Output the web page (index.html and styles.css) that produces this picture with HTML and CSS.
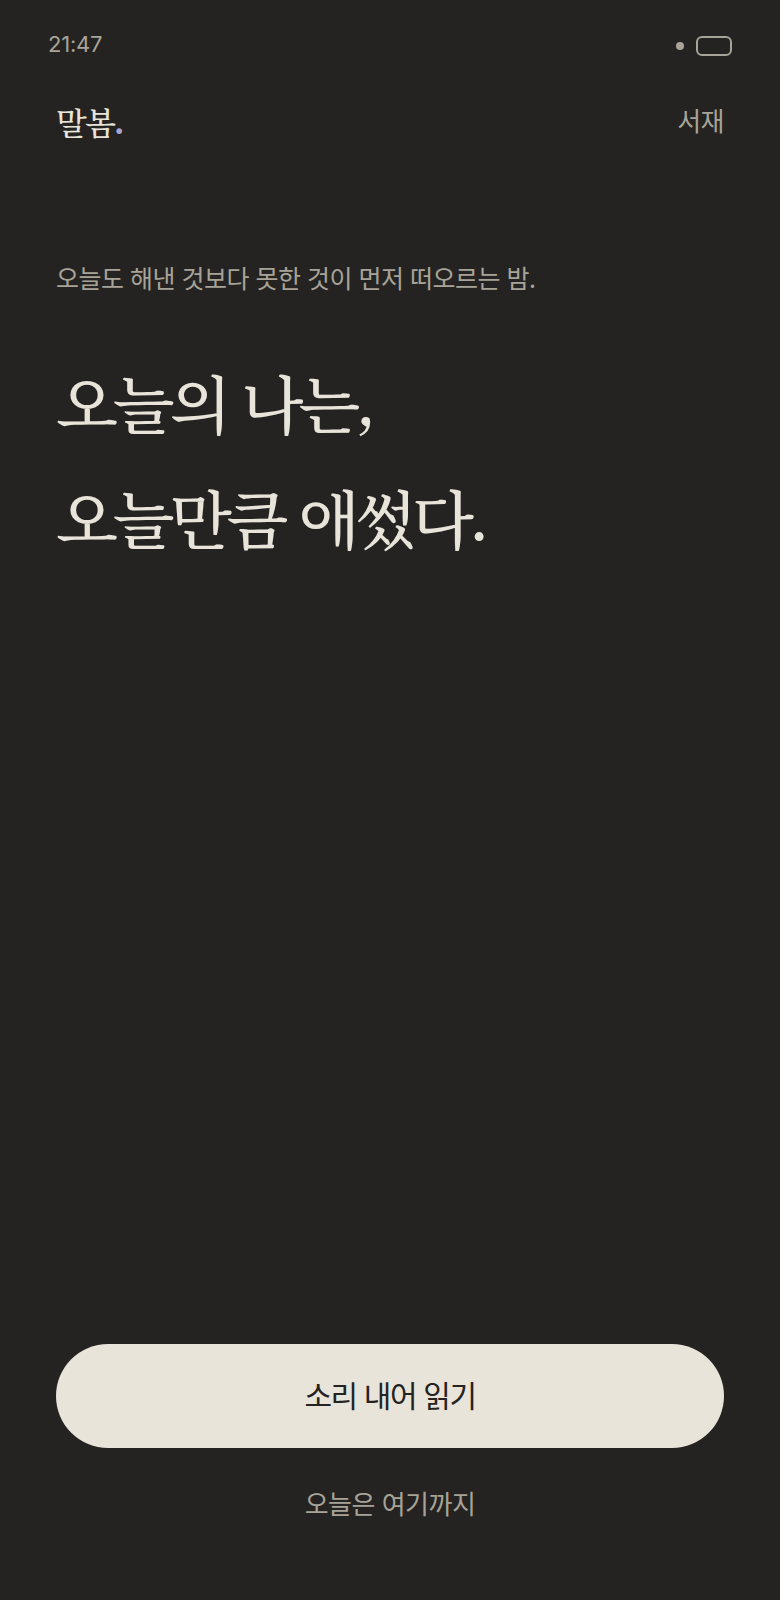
FILE: index.html
```html
<!DOCTYPE html>
<html lang="ko">
	<head>
		<meta charset="UTF-8" />
		<meta name="viewport" content="width=device-width, initial-scale=1.0" />
		<title>말봄</title>
		<link rel="stylesheet" href="styles.css">
	</head>
	<body>
		<div class="screen">
			<div class="status-bar">
				<span class="time">21:47</span>
				<div class="status-icons">
					<span class="status-dot"></span>
					<span class="battery"></span>
				</div>
			</div>

			<header class="top-nav">
				<div class="logo">말봄<span class="logo-dot">.</span></div>
				<a href="#" class="nav-link">서재</a>
			</header>

			<main class="content">
				<p class="lead">오늘도 해낸 것보다 못한 것이 먼저 떠오르는 밤.</p>
				<h1 class="headline">오늘의 나는,<br />오늘만큼 애썼다.</h1>
			</main>

			<footer class="actions">
				<button class="primary-btn">소리 내어 읽기</button>
				<a href="#" class="quiet-link">오늘은 여기까지</a>
			</footer>
		</div>
	</body>
</html>
```

FILE: styles.css
```css
* {
	box-sizing: border-box;
}
body {
	margin: 0;
	background-color: #242321;
	color: #e8e4da;
	font-family: "Noto Sans CJK KR", "Noto Sans", sans-serif;
}
.screen {
	display: flex;
	flex-direction: column;
	height: 1600px;
}
.status-bar {
	display: flex;
	align-items: center;
	justify-content: space-between;
	height: 92px;
	padding: 0 48px;
}
.time {
	padding-bottom: 4px;
	font-family: Inter, sans-serif;
	font-size: 22px;
	letter-spacing: -0.2px;
	color: #a8a398;
}
.status-icons {
	display: flex;
	align-items: center;
	gap: 12px;
}
.status-dot {
	width: 8px;
	height: 8px;
	border-radius: 50%;
	background-color: #a8a398;
}
.battery {
	width: 36px;
	height: 20px;
	border: 2px solid #a8a398;
	border-radius: 6px;
}
.top-nav {
	display: flex;
	align-items: center;
	justify-content: space-between;
	height: 64px;
	padding: 0 56px 6px;
}
.logo {
	font-family: "Noto Serif KR", "Noto Serif CJK KR", serif;
	font-size: 32px;
	font-weight: 500;
	letter-spacing: -2px;
}
.logo-dot {
	color: #a9a6d0;
	font-weight: 700;
}
.nav-link {
	padding-bottom: 4px;
	font-size: 26px;
	letter-spacing: -0.5px;
	color: #a8a398;
	text-decoration: none;
}
.content {
	flex: 1;
	padding: 103px 56px 0;
}
.lead {
	margin: 0;
	font-size: 25px;
	letter-spacing: -0.5px;
	color: #a8a398;
}
.headline {
	margin: 49px 0 0;
	font-family: "Noto Serif KR", "Noto Serif CJK KR", serif;
	font-size: 64px;
	font-weight: 500;
	line-height: 115px;
	letter-spacing: -5px;
}
.actions {
	display: flex;
	flex-direction: column;
	align-items: center;
	gap: 36px;
	padding: 0 56px 79px;
}
.primary-btn {
	width: 100%;
	height: 104px;
	padding: 0 0 4px;
	border: none;
	border-radius: 52px;
	background-color: #e8e4da;
	color: #242321;
	font-family: inherit;
	font-size: 30px;
	letter-spacing: -1.4px;
}
.quiet-link {
	font-size: 26px;
	letter-spacing: -0.5px;
	color: #a8a398;
	text-decoration: none;
}
```
